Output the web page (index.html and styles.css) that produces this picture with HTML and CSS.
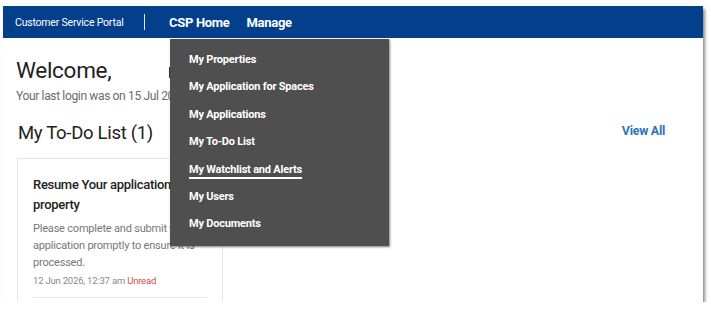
FILE: index.html
```html
<!DOCTYPE html>
<html>
<head>
    <meta charset="utf-8" />
    <title>Customer Service Portal</title>
    <link rel="stylesheet" href="styles.css">
</head>
<body>
    <div class="screen">
        <div class="topbar">
            <span class="brand">Customer Service Portal</span>
            <span class="sep"></span>
            <a class="navlink">CSP Home</a>
            <a class="navlink">Manage</a>
        </div>

        <div class="main">
            <h1 class="welcome">Welcome, <span class="username"></span></h1>
            <div class="lastlogin">Your last login was on 15 Jul 2026, 09:12 am</div>

            <div class="todohead">
                <h2 class="todotitle">My To-Do List (1)</h2>
                <a class="viewall">View All</a>
            </div>

            <div class="card">
                <div class="cardtitle">Resume Your application for property</div>
                <div class="carddesc">Please complete and submit your application promptly to ensure it is processed.</div>
                <div class="carddate">12 Jun 2026, 12:37 am <span class="unread">Unread</span></div>
                <div class="carddivider"></div>
            </div>
        </div>

        <!-- menu opened under "Manage" -->
        <ul class="dropdown">
            <li>My Properties</li>
            <li>My Application for Spaces</li>
            <li>My Applications</li>
            <li>My To-Do List</li>
            <li class="active">My Watchlist and Alerts</li>
            <li>My Users</li>
            <li>My Documents</li>
        </ul>
    </div>
</body>
</html>
```

FILE: styles.css
```css
body {
    margin: 0;
    background-color: #ffffff;
    font-family: Roboto, "Liberation Sans", sans-serif;
}

.screen {
    position: relative;
    margin: 6px 0 0 3px;
    width: 700px;
    height: 296px;
    overflow: hidden;
    background-color: #ffffff;
    box-shadow: 2px 3px 3px rgba(0, 0, 0, 0.45);
}

.topbar {
    display: flex;
    align-items: center;
    height: 32px;
    padding-left: 12px;
    background-color: #033f8b;
    color: #ffffff;
}

.brand {
    width: 129px;
    font-size: 10.5px;
    letter-spacing: -0.2px;
}

.sep {
    width: 1px;
    height: 16px;
    background-color: #dfe6f0;
    margin-right: 24px;
}

.navlink {
    font-size: 13px;
    font-weight: 700;
    letter-spacing: -0.3px;
    margin-right: 17px;
}

.main {
    padding: 18px 38px 0 13px;
}

.welcome {
    margin: 0;
    font-size: 22.5px;
    line-height: 28px;
    font-weight: 400;
    color: #222222;
    letter-spacing: -0.3px;
}

.username {
    display: inline-block;
    width: 60px;
    height: 11px;
    margin-left: 52px;
    background-color: #333333;
}

.lastlogin {
    margin-top: 4px;
    font-size: 12px;
    line-height: 16px;
    color: #6b6b6b;
    letter-spacing: -0.35px;
}

.todohead {
    display: flex;
    justify-content: space-between;
    align-items: center;
    margin-top: 17px;
    padding-left: 2px;
}

.todotitle {
    margin: 0;
    font-size: 18.5px;
    line-height: 24px;
    font-weight: 400;
    color: #222222;
    letter-spacing: -0.3px;
}

.viewall {
    margin-bottom: 5px;
    font-size: 12.5px;
    font-weight: 700;
    color: #2d72c2;
    letter-spacing: -0.3px;
}

.card {
    width: 174px;
    margin-top: 13px;
    margin-left: 1px;
    padding: 16px 15px 20px 15px;
    border: 1px solid #e6e6e6;
}

.cardtitle {
    font-size: 13px;
    line-height: 20px;
    font-weight: 500;
    color: #222222;
    letter-spacing: -0.3px;
}

.carddesc {
    margin-top: 5px;
    font-size: 11px;
    line-height: 17px;
    color: #777777;
    letter-spacing: -0.2px;
}

.carddate {
    margin-top: 3px;
    font-size: 9.5px;
    line-height: 14px;
    color: #888888;
    letter-spacing: -0.2px;
}

.unread {
    color: #d0503f;
}

.carddivider {
    margin-top: 9px;
    height: 1px;
    background-color: #e8e8e8;
}

.dropdown {
    position: absolute;
    left: 167px;
    top: 33px;
    width: 219px;
    height: 207px;
    box-sizing: border-box;
    margin: 0;
    padding: 7px 0 0 19px;
    list-style: none;
    background-color: #4f4f4f;
    box-shadow: 1px 1px 2px rgba(0, 0, 0, 0.5);
}

.dropdown li {
    font-size: 11px;
    line-height: 27.4px;
    font-weight: 700;
    color: #ffffff;
    letter-spacing: -0.2px;
}

.dropdown li.active {
    text-decoration: underline;
    text-underline-offset: 4px;
    text-decoration-thickness: 1.5px;
}
```
